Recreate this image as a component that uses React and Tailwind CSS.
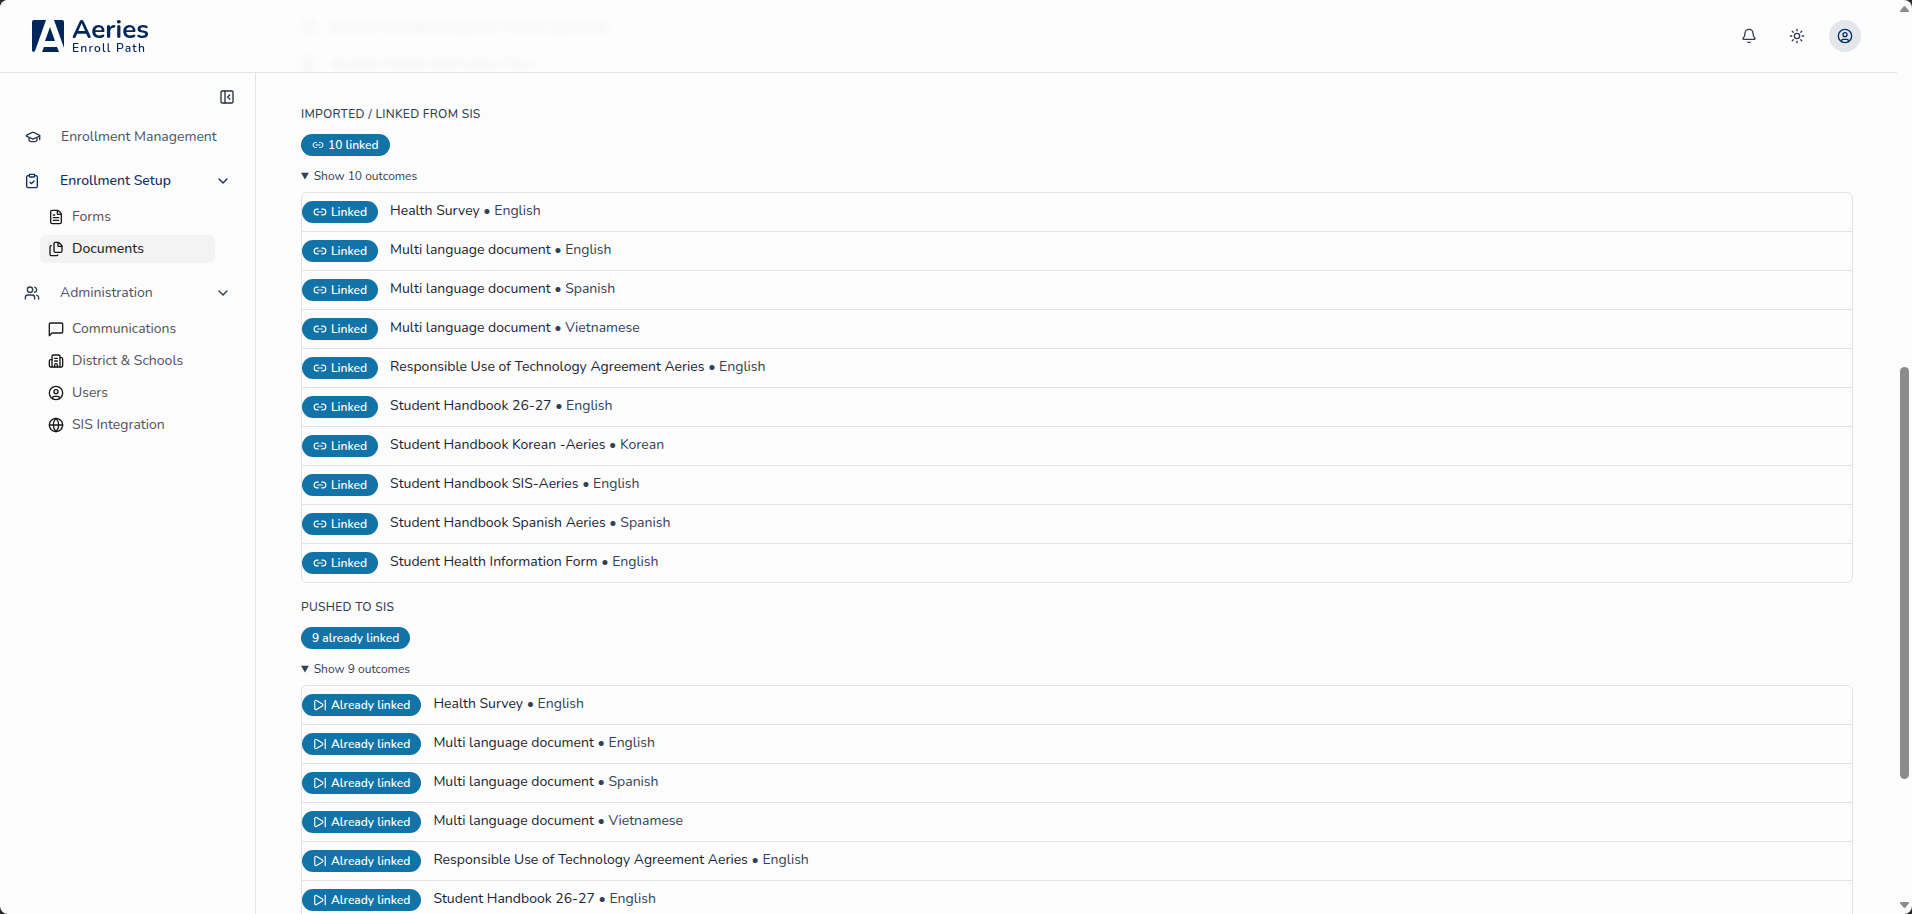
import React from 'react';
import {
  Bell,
  Building2,
  ChevronDown,
  CircleCheck,
  CircleUser,
  ClipboardCheck,
  Files,
  FileText,
  Globe,
  GraduationCap,
  Link2,
  PanelLeftClose,
  SkipForward,
  Sun,
  Users,
} from 'lucide-react';

const documents = [
  { name: 'Health Survey', language: 'English' },
  { name: 'Multi language document', language: 'English' },
  { name: 'Multi language document', language: 'Spanish' },
  { name: 'Multi language document', language: 'Vietnamese' },
  { name: 'Responsible Use of Technology Agreement Aeries', language: 'English' },
  { name: 'Student Handbook 26-27', language: 'English' },
  { name: 'Student Handbook Korean -Aeries', language: 'Korean' },
  { name: 'Student Handbook SIS-Aeries', language: 'English' },
  { name: 'Student Handbook Spanish Aeries', language: 'Spanish' },
  { name: 'Student Health Information Form', language: 'English' },
];

const MessageIcon = () => (
  <svg width="16" height="16" viewBox="0 0 24 24" fill="none" stroke="currentColor" strokeWidth="2" strokeLinecap="round" strokeLinejoin="round">
    <path d="M22 16a2 2 0 0 1-2 2H6l-4 4V5a2 2 0 0 1 2-2h16a2 2 0 0 1 2 2z" />
  </svg>
);

const Logo = () => (
  <a href="#home" className="flex items-center gap-2 text-[#00265a]">
    <svg width="32" height="32" viewBox="0 0 32 32" fill="currentColor" aria-hidden="true">
      <path d="M2 0H14L3 31Q2 32 1 32Q0 31 0 30V2Q0 0 2 0Z" />
      <path d="M22 0H30Q32 0 32 2V28Z" />
      <path d="M18 7L23 21H13Z" />
      <path d="M12 27H25L27 32H10Z" />
    </svg>
    <span className="flex flex-col">
      <span className="text-[26px] leading-6 font-bold">Aeries</span>
      <span className="text-xs leading-3 font-semibold tracking-widest">Enroll Path</span>
    </span>
  </a>
);

const Header = () => (
  <header className="absolute inset-x-0 top-0 z-10 flex h-[73px] items-center justify-between border-b border-[#e0e4e9] bg-[#fdfdfd]/90 pr-9 pl-8 backdrop-blur-xs">
    <Logo />
    <div className="flex items-center gap-4 text-[#2c3b4f]">
      <button className="flex size-8 items-center justify-center" aria-label="Notifications">
        <Bell size={16} />
      </button>
      <button className="flex size-8 items-center justify-center" aria-label="Theme">
        <Sun size={16} />
      </button>
      <button className="flex size-8 items-center justify-center rounded-full bg-[#e3e7ec] text-[#00306a]" aria-label="Account">
        <CircleUser size={16} />
      </button>
    </div>
  </header>
);

const SubItem = ({ icon, label, active }) => (
  <li>
    <a
      href="#"
      className={`flex h-7 items-center gap-2 rounded-md px-2 ${
        active ? 'bg-[#f3f3f3] font-medium text-[#27272a]' : 'text-[#52525b]'
      }`}
    >
      <span className="text-[#18181b]">{icon}</span>
      {label}
    </a>
  </li>
);

const Group = ({ icon, label, active, children }) => (
  <div>
    <button
      className={`flex h-9 w-full items-center pr-6 pl-6 ${
        active ? 'font-medium text-[#0a3161]' : 'text-[#475569]'
      }`}
    >
      {icon}
      <span className="ml-5 flex-1 text-left">{label}</span>
      <ChevronDown size={16} className={active ? 'text-[#0a3161]' : 'text-[#2c3b4f]'} />
    </button>
    <ul className="mt-1 mr-10 ml-10 flex flex-col gap-1">{children}</ul>
  </div>
);

const Sidebar = () => (
  <aside className="w-64 shrink-0 border-r border-[#e0e4e9] pt-[87px] text-sm">
    <div className="flex h-5 items-center justify-end pr-5 text-[#27303c]">
      <button aria-label="Collapse sidebar">
        <PanelLeftClose size={16} />
      </button>
    </div>
    <nav className="mt-3 flex flex-col">
      <a href="#enrollment" className="flex h-9 items-center gap-5 pl-[25px] text-[#475569]">
        <GraduationCap size={16} className="text-[#2c3b4f]" />
        Enrollment Management
      </a>
      <div className="mt-2 flex flex-col gap-3">
        <Group icon={<ClipboardCheck size={16} />} label="Enrollment Setup" active>
          <SubItem icon={<FileText size={16} />} label="Forms" />
          <SubItem icon={<Files size={16} />} label="Documents" active />
        </Group>
        <Group icon={<Users size={16} className="text-[#2c3b4f]" />} label="Administration">
          <SubItem icon={<MessageIcon />} label="Communications" />
          <SubItem icon={<Building2 size={16} />} label="District & Schools" />
          <SubItem icon={<CircleUser size={16} />} label="Users" />
          <SubItem icon={<Globe size={16} />} label="SIS Integration" />
        </Group>
      </div>
    </nav>
  </aside>
);

const Badge = ({ icon, children }) => (
  <span className="inline-flex h-[22px] shrink-0 items-center gap-1 rounded-full bg-[#1173a8] px-[11px] text-xs font-semibold text-white">
    {icon}
    {children}
  </span>
);

const Outcomes = ({ title, summary, summaryIcon, status, statusIcon, items }) => (
  <section>
    <h3 className="text-xs font-medium tracking-wide text-[#334155] uppercase">{title}</h3>
    <div className="mt-3 flex">
      <Badge icon={summaryIcon}>{summary}</Badge>
    </div>
    <details open className="mt-3">
      <summary className="text-xs text-[#334155]">Show {items.length} outcomes</summary>
      <ul className="mt-2 divide-y divide-[#e0e4e9] rounded-md border border-[#e0e4e9]">
        {items.map((item) => (
          <li key={item.name + item.language} className="flex items-start gap-3 py-2 text-sm">
            <Badge icon={statusIcon}>{status}</Badge>
            <span className="text-[#1a2433]">
              {item.name} <span className="text-[#334155]">• {item.language}</span>
            </span>
          </li>
        ))}
      </ul>
    </details>
  </section>
);

const Scrollbar = () => (
  <div className="flex w-[15px] shrink-0 flex-col items-center py-1.5 text-[#8b8b8b]">
    <svg width="9" height="6" viewBox="0 0 9 6" fill="currentColor">
      <path d="M3.5 .5Q4.500 -.3 5.500 .5L9 5V6H0V5Z" />
    </svg>
    <div className="flex w-[9px] flex-1 flex-col">
      <div className="grow-[355]" />
      <div className="grow-[412] rounded-full bg-[#8b8b8b]" />
      <div className="grow-[123]" />
    </div>
    <svg width="9" height="6" viewBox="0 0 9 6" fill="currentColor">
      <path d="M0 0H9V1L5.500 5.500Q4.500 6.300 3.500 5.500L0 1Z" />
    </svg>
  </div>
);

const App = () => {
  return (
    <div className="h-screen bg-[#2b2b2b] font-['Nunito','Lato',sans-serif]">
      <div className="flex h-full overflow-hidden rounded-lg bg-[#fcfcfc]">
        <div className="relative flex min-w-0 flex-1 overflow-hidden">
          <Header />
          <Sidebar />
          <main className="min-w-0 flex-1 pt-2 pr-11 pl-[45px]">
            <ul className="text-sm text-[#334155]">
              {documents.slice(-2).map((item) => (
                <li key={item.name} className="flex h-[37px] items-center gap-3">
                  <CircleCheck size={16} />
                  {item.name}
                  {item.language !== 'English' && ` (${item.language})`}
                </li>
              ))}
            </ul>
            <div className="mt-6 flex flex-col gap-4">
              <Outcomes
                title="Imported / linked from SIS"
                summary="10 linked"
                summaryIcon={<Link2 size={12} />}
                status="Linked"
                statusIcon={<Link2 size={14} />}
                items={documents}
              />
              <Outcomes
                title="Pushed to SIS"
                summary="9 already linked"
                status="Already linked"
                statusIcon={<SkipForward size={14} />}
                items={documents.slice(0, 9)}
              />
            </div>
          </main>
        </div>
        <Scrollbar />
      </div>
    </div>
  );
};

export default App;
